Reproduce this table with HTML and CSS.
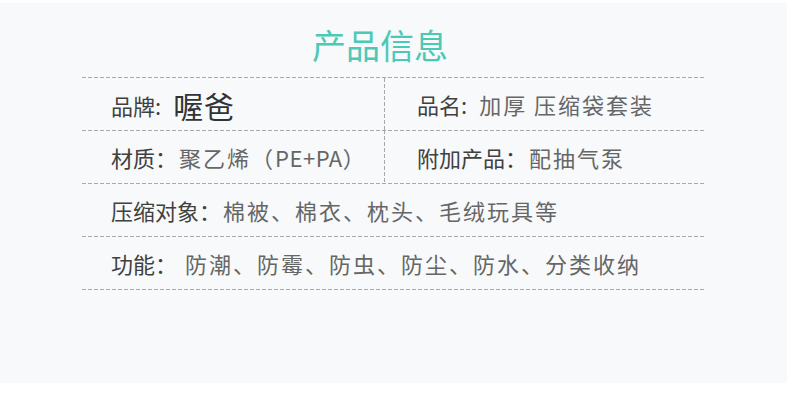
FILE: index.html
```html
<!DOCTYPE html>
<html lang="zh-CN">
<head>
<meta charset="utf-8">
<title>产品信息</title>
<link rel="stylesheet" href="styles.css">
</head>
<body>
<div class="panel">
  <div class="title-bar"><h1 class="title">产品信息</h1></div>
  <div class="table">
    <div class="row split">
      <div class="cell left"><span class="label half">品牌:</span><span class="brand">喔爸</span></div>
      <div class="cell right"><span class="label half">品名:</span><span class="value">加厚 压缩袋套装</span></div>
    </div>
    <div class="row split">
      <div class="cell left"><span class="label">材质：</span><span class="value">聚乙烯（<span class="latin">PE+PA</span>）</span></div>
      <div class="cell right"><span class="label">附加产品：</span><span class="value">配抽气泵</span></div>
    </div>
    <div class="row">
      <div class="cell left"><span class="label">压缩对象：</span><span class="value">棉被、棉衣、枕头、毛绒玩具等</span></div>
    </div>
    <div class="row">
      <div class="cell left"><span class="label">功能：</span><span class="value wide">防潮、防霉、防虫、防尘、防水、分类收纳</span></div>
    </div>
  </div>
</div>
</body>
</html>
```

FILE: styles.css
```css
html, body {
  margin: 0;
  padding: 0;
  background: #ffffff;
}
body {
  font-family: "Noto Sans CJK SC", "Noto Sans", sans-serif;
  padding-top: 3px;
}
.panel {
  width: 787px;
  height: 380px;
  background: #f7f9fa;
  box-sizing: border-box;
}
.title-bar {
  height: 74px;
  padding-top: 10px;
  padding-right: 27px;
  box-sizing: border-box;
  display: flex;
  align-items: center;
  justify-content: center;
}
.title {
  margin: 0;
  font-size: 34px;
  font-weight: normal;
  color: #4cc9b6;
  line-height: 1;
}
.table {
  margin-left: 82px;
  width: 623px;
  padding-top: 1px;
  background: repeating-linear-gradient(to right, #a9a9a9 0 4px, transparent 4px 6px) top left / 100% 1px no-repeat;
}
.row {
  height: 53px;
  display: flex;
  background: repeating-linear-gradient(to right, #a9a9a9 0 4px, transparent 4px 6px) bottom left / 100% 1px no-repeat;
}
.cell {
  display: flex;
  align-items: center;
  height: 52px;
  white-space: nowrap;
}
.cell.left {
  padding-left: 29px;
}
.split .cell.left {
  width: 303px;
  height: 53px;
  box-sizing: border-box;
  background: repeating-linear-gradient(to bottom, #a9a9a9 0 4px, transparent 4px 6px) top right / 1px 100% no-repeat;
}
.split + .split .cell.left {
  margin-top: -1px;
}
.cell.right {
  padding-left: 32px;
}
.label {
  font-size: 22px;
  color: #404040;
  margin-right: 2px;
}
.label.half {
  margin-right: 12px;
}
.value {
  font-size: 22px;
  color: #666666;
  letter-spacing: 2px;
}
.latin {
  letter-spacing: 0.5px;
}
.value.wide {
  margin-left: 6px;
}
.brand {
  font-size: 30px;
  color: #333333;
  letter-spacing: 1px;
}
```
